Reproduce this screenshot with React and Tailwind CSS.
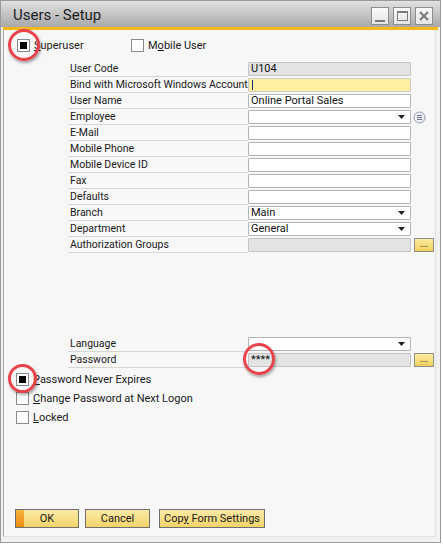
import React from "react";

const Check = ({ checked }) => (
  <span className="w-[13px] h-[13px] border border-[#8a8a8a] bg-white flex items-center justify-center shrink-0">
    {checked && <span className="w-[7px] h-[7px] bg-black" />}
  </span>
);

const CheckRow = ({ checked, children }) => (
  <div className="flex items-center h-[13px]">
    <Check checked={checked} />
    <span className="ml-[4px] text-[11px] leading-[13px] text-[#1a1a1a]">{children}</span>
  </div>
);

const Arrow = () => (
  <svg width="7" height="4" viewBox="0 0 7 4" className="absolute right-[5px] top-[4px]">
    <path d="M0 0 H7 L3.5 4 Z" fill="#222" />
  </svg>
);

const Field = ({ value, tone = "white", arrow, focus }) => {
  const bg =
    tone === "gray"
      ? "bg-[#e3e3e3] border-[#c4c4c4]"
      : tone === "yellow"
      ? "bg-[#fff0a0] border-[#c9c9c9]"
      : "bg-white border-[#b4b4b4]";
  return (
    <div className={`relative w-[163px] h-[14px] border rounded-[1px] ${bg} pl-[2px] text-[11px] leading-[12px] text-[#111]`}>
      {focus && <span className="absolute left-[3px] top-[1px] w-[1px] h-[10px] bg-[#1a2a6c]" />}
      {value}
      {arrow && <Arrow />}
    </div>
  );
};

const Dots = () => (
  <div className="ml-[3px] w-[20px] h-[14px] border border-[#8e8e8e] bg-gradient-to-b from-[#fcec9e] to-[#f2cf5a] flex items-center justify-center text-[10px] leading-[10px] text-[#333] pb-[2px]">
    ...
  </div>
);

const Row = ({ label, children }) => (
  <div className="flex h-[16px] items-center">
    <div className="w-[180px] h-[16px] border-b border-[#d6d6d6] pl-[2px] text-[10.5px] leading-[15px] text-[#1a1a1a] whitespace-nowrap overflow-hidden">
      {label}
    </div>
    {children}
  </div>
);

const Circle = ({ className }) => (
  <span
    className={`absolute rounded-full border-[3px] border-[#e8424a] shadow-[1px_2px_3px_rgba(0,0,0,0.35)] pointer-events-none ${className}`}
  />
);

const Btn = ({ children, w, primary, className = "" }) => (
  <button
    className={`relative h-[19px] ${w} ${className} border border-[#6f6f6f] bg-gradient-to-b from-[#fbe9a6] to-[#f3d468] text-[11px] leading-[17px] text-[#1a1a1a] overflow-hidden`}
  >
    {primary && (
      <span className="absolute left-0 top-0 h-full w-[8px] bg-gradient-to-b from-[#f7b23a] to-[#ee8c0c]" />
    )}
    {children}
  </button>
);

const TitleBtn = ({ children }) => (
  <div className="w-[18px] h-[18px] border border-[#8d8d8d] bg-gradient-to-b from-[#fafafa] to-[#e4e4e4] flex items-center justify-center">
    {children}
  </div>
);

export default function App() {
  return (
    <div className="w-[443px] h-[546px] bg-white [font-family:Roboto,'Noto_Sans',sans-serif] relative">
      <div className="w-[441px] h-[543px] border border-[#9a9a9a] bg-[#f1f1f1] flex flex-col">
        {/* title bar */}
        <div className="h-[26px] bg-gradient-to-b from-[#e2e2e2] to-[#a8a8a8] flex items-center justify-between pl-[12px] pr-[7px]">
          <span className="text-[15px] text-[#1e1e1e] leading-[20px] pt-[2px]">Users - Setup</span>
          <div className="flex gap-[4px] pt-[4px]">
            <TitleBtn>
              <span className="w-[10px] h-[2px] bg-[#7a7a7a] mt-[9px]" />
            </TitleBtn>
            <TitleBtn>
              <span className="w-[11px] h-[10px] border border-[#7a7a7a] border-t-2" />
            </TitleBtn>
            <TitleBtn>
              <svg width="10" height="10" viewBox="0 0 10 10">
                <path d="M1 1 L9 9 M9 1 L1 9" stroke="#7a7a7a" strokeWidth="2.2" />
              </svg>
            </TitleBtn>
          </div>
        </div>
        <div className="h-[3px] bg-[#f6b81a] mx-[2px]" />

        {/* content */}
        <div className="flex-1 ml-[2px] mr-[4px] mb-[5px] bg-[#f7f7f7] border-l border-[#a9a9a9] border-r border-b border-r-[#e3e3e3] border-b-[#e3e3e3] flex flex-col pl-[13px] pt-[9px] pb-[8px]">
          <div className="flex items-center">
            <div className="w-[114px]">
              <CheckRow checked>
                <span className="underline">S</span>uperuser
              </CheckRow>
            </div>
            <CheckRow>
              M<span className="underline">o</span>bile User
            </CheckRow>
          </div>

          <div className="ml-[51px] mt-[9px] flex flex-col">
            <Row label="User Code">
              <Field value="U104" tone="gray" />
            </Row>
            <Row label="Bind with Microsoft Windows Account">
              <Field tone="yellow" focus />
            </Row>
            <Row label="User Name">
              <Field value="Online Portal Sales" />
            </Row>
            <Row label="Employee">
              <Field arrow />
              <svg width="13" height="13" viewBox="0 0 13 13" className="ml-[2px]">
                <circle cx="6.5" cy="6.5" r="5.5" fill="#eef0f4" stroke="#8c97ab" strokeWidth="1" />
                <path d="M4 4.5 H9 M4 6.5 H9 M4 8.5 H9" stroke="#6d7890" strokeWidth="1" />
              </svg>
            </Row>
            <Row label="E-Mail">
              <Field />
            </Row>
            <Row label="Mobile Phone">
              <Field />
            </Row>
            <Row label="Mobile Device ID">
              <Field />
            </Row>
            <Row label="Fax">
              <Field />
            </Row>
            <Row label="Defaults">
              <Field />
            </Row>
            <Row label="Branch">
              <Field value="Main" arrow />
            </Row>
            <Row label="Department">
              <Field value="General" arrow />
            </Row>
            <Row label="Authorization Groups">
              <Field tone="gray" />
              <Dots />
            </Row>

            <div className="h-[83px]" />

            <Row label="Language">
              <Field arrow />
            </Row>
            <Row label="Password">
              <Field value="****" tone="gray" />
              <Dots />
            </Row>
          </div>

          <div className="mt-[5px] flex flex-col gap-[6px] -ml-[1px]">
            <CheckRow checked>
              <span className="underline">P</span>assword Never Expires
            </CheckRow>
            <CheckRow>
              <span className="underline">C</span>hange Password at Next Logon
            </CheckRow>
            <CheckRow>
              <span className="underline">L</span>ocked
            </CheckRow>
          </div>

          <div className="mt-auto flex gap-[6px] -ml-[2px]">
            <Btn w="w-[64px]" primary>OK</Btn>
            <Btn w="w-[65px]">Cancel</Btn>
            <Btn w="w-[106px]" className="ml-[3px]">
              Cop<span className="underline">y</span> Form Settings
            </Btn>
          </div>
        </div>
      </div>

      <Circle className="left-[8px] top-[29px] w-[32px] h-[32px]" />
      <Circle className="left-[243px] top-[343px] w-[32px] h-[32px]" />
      <Circle className="left-[8px] top-[364px] w-[29px] h-[29px]" />
    </div>
  );
}
